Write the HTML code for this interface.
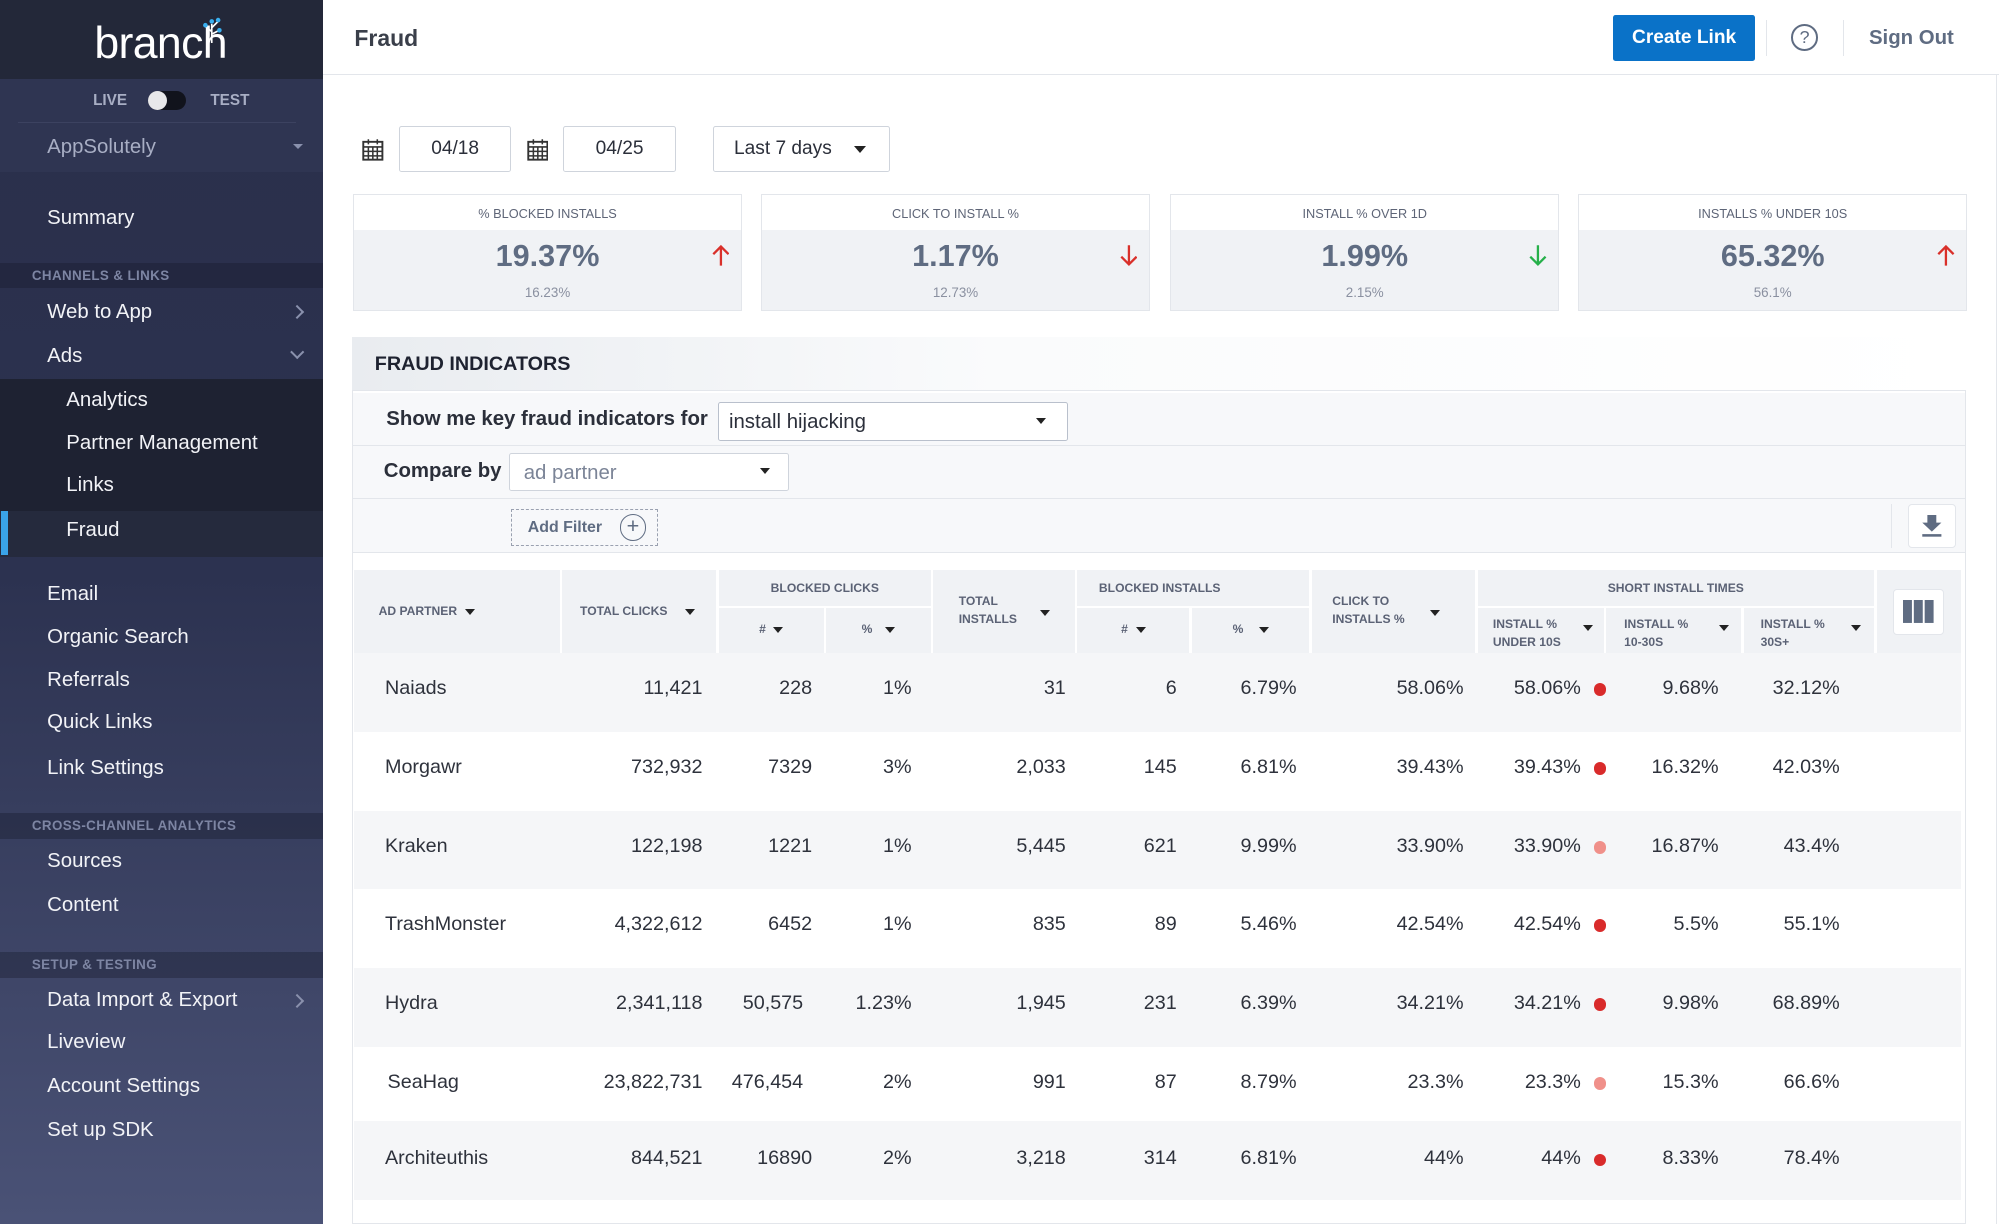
<!DOCTYPE html>
<html><head><meta charset="utf-8"><style>
*{box-sizing:border-box;margin:0;padding:0}
html,body{width:1999px;height:1224px;overflow:hidden;background:#fff}
#w{zoom:1.27487;width:1568px;height:960px;position:relative;font-family:"Liberation Sans",sans-serif;color:#2b2f3a}
.a{position:absolute}
#sb{left:0;top:0;width:253px;height:960px;background:linear-gradient(#2a2f4a 0,#2c3250 450px,#4a5276 960px);color:#fff}
.si{position:absolute;left:37px;font-size:16px;color:#f2f3f7}
.sub{position:absolute;left:52px;font-size:16px;color:#f2f3f7}
.sh{position:absolute;left:0;width:253px;height:20px;background:rgba(20,24,40,.35);font-size:10.5px;font-weight:bold;color:#7d85a3;padding:4px 0 0 25px;letter-spacing:.3px}
.chev{position:absolute;right:16px;width:8px;height:8px;border-right:1.6px solid #8a91ad;border-top:1.6px solid #8a91ad}
.card{position:absolute;top:152px;width:305px;height:92px;border:1.5px solid #e3e6eb;background:#f0f2f5}
.card .t{height:28px;background:#fff;text-align:center;font-size:10px;color:#5e6577;padding-top:9px}
.card .v{text-align:center;font-size:24px;font-weight:bold;color:#5f6c82;margin-top:7px}
.card .p{text-align:center;font-size:10.5px;color:#8a90a0;margin-top:8px}
.card svg{position:absolute;right:9px;top:39px}
.box{position:absolute;border:1px solid #cfd4dc;border-radius:2px;background:#fff;font-size:15px;color:#2b2f3a}
.th{position:absolute;background:#f0f2f5;font-size:9.5px;font-weight:bold;color:#5b6275}
.row{position:absolute;left:278px;width:1260px;height:62px;font-size:15.5px;color:#2e323c}
.row span{position:absolute;top:19px}
.r{text-align:right}
.dot{position:absolute;width:10px;height:10px;border-radius:50%;top:24px}
.tri{display:inline-block;width:0;height:0;border-left:4px solid transparent;border-right:4px solid transparent;border-top:5px solid #222;margin-left:6px;vertical-align:middle}
</style></head><body><div id="w">
<div id="sb" class="a">
 <div class="a" style="left:0;top:0;width:253px;height:62px;background:#232839"></div>
 <div class="a" style="left:74px;top:15px;font-size:35px;color:#fff;letter-spacing:-.5px">branch</div>
 <svg class="a" style="left:156px;top:12px" width="24" height="22"><g stroke="#fff" stroke-width="1.3" fill="none"><path d="M10 22V7M10 13l-5-4M10 10l5-5M10 15l6-3"/></g><g fill="#3ab0f0"><circle cx="10" cy="5" r="1.8"/><circle cx="5" cy="8" r="1.8"/><circle cx="15" cy="4" r="1.8"/><circle cx="16" cy="12" r="1.8"/></g></svg>
 <div class="a" style="left:0;top:62px;width:253px;height:73px;background:#2f3552"></div>
 <div class="a" style="left:73px;top:72px;font-size:12px;font-weight:bold;color:#a8aec4">LIVE</div>
 <div class="a" style="left:116px;top:71px;width:30px;height:15px;border-radius:8px;background:#11131c"></div>
 <div class="a" style="left:116px;top:71px;width:15px;height:15px;border-radius:50%;background:#e8e8ea"></div>
 <div class="a" style="left:165px;top:72px;font-size:12px;font-weight:bold;color:#a8aec4">TEST</div>
 <div class="a" style="left:14px;top:96px;width:218px;border-top:1px solid #3c4260"></div>
 <div class="a" style="left:37px;top:107px;font-size:16px;color:#a8aec4">AppSolutely</div>
 <div class="a" style="left:230px;top:113px;border-left:4px solid transparent;border-right:4px solid transparent;border-top:4px solid #8a91ad"></div>
 <div class="si" style="top:162px">Summary</div>
 <div class="sh" style="top:206px">CHANNELS &amp; LINKS</div>
 <div class="si" style="top:236px">Web to App</div><div class="chev" style="top:241px;transform:rotate(45deg)"></div>
 <div class="si" style="top:271px">Ads</div><div class="chev" style="top:272px;transform:rotate(135deg)"></div>
 <div class="a" style="left:0;top:297px;width:253px;height:140px;background:#1e2232"></div>
 <div class="a" style="left:0;top:401px;width:253px;height:36px;background:#252a3d"></div>
 <div class="a" style="left:1px;top:401px;width:5px;height:34px;background:#3aa3e8"></div>
 <div class="sub" style="top:305px">Analytics</div>
 <div class="sub" style="top:339px">Partner Management</div>
 <div class="sub" style="top:372px">Links</div>
 <div class="sub" style="top:407px">Fraud</div>
 <div class="si" style="top:457px">Email</div>
 <div class="si" style="top:491px">Organic Search</div>
 <div class="si" style="top:525px">Referrals</div>
 <div class="si" style="top:558px">Quick Links</div>
 <div class="si" style="top:594px">Link Settings</div>
 <div class="sh" style="top:638px">CROSS-CHANNEL ANALYTICS</div>
 <div class="si" style="top:667px">Sources</div>
 <div class="si" style="top:701px">Content</div>
 <div class="sh" style="top:747px">SETUP &amp; TESTING</div>
 <div class="si" style="top:776px">Data Import &amp; Export</div><div class="chev" style="top:781px;transform:rotate(45deg)"></div>
 <div class="si" style="top:809px">Liveview</div>
 <div class="si" style="top:843px">Account Settings</div>
 <div class="si" style="top:878px">Set up SDK</div>
</div>
<!-- header -->
<div class="a" style="left:253px;top:58px;width:1315px;border-top:1px solid #e3e6eb"></div>
<div class="a" style="left:1566px;top:58px;height:902px;border-left:1px solid #e3e6eb"></div>
<div class="a" style="left:278px;top:20px;font-size:18px;font-weight:bold;color:#3a3f4a">Fraud</div>
<div class="a" style="left:1265px;top:12px;width:112px;height:36px;background:#0a72c8;border-radius:2px;color:#fff;font-weight:bold;font-size:15px;text-align:center;line-height:36px">Create Link</div>
<div class="a" style="left:1385px;top:16px;height:28px;border-left:1px solid #e3e6eb"></div>
<div class="a" style="left:1405px;top:19px;width:21px;height:21px;border:1.6px solid #5f6c82;border-radius:50%;color:#5f6c82;font-size:14px;text-align:center;line-height:18px">?</div>
<div class="a" style="left:1446px;top:16px;height:28px;border-left:1px solid #e3e6eb"></div>
<div class="a" style="left:1466px;top:21px;font-size:16px;font-weight:bold;color:#5f6c82">Sign Out</div>
<!-- date row -->
<svg class="a" style="left:284px;top:108px" width="17" height="18"><rect x="1" y="3" width="15" height="14" fill="none" stroke="#333" stroke-width="1.5"/><path d="M1 7h15M5 1v4M12 1v4M1 10.5h15M1 14h15M5 7v10M8.5 7v10M12 7v10" stroke="#333" stroke-width="1.2"/></svg>
<div class="box" style="left:313px;top:99px;width:88px;height:36px;text-align:center;line-height:34px">04/18</div>
<svg class="a" style="left:413px;top:108px" width="17" height="18"><rect x="1" y="3" width="15" height="14" fill="none" stroke="#333" stroke-width="1.5"/><path d="M1 7h15M5 1v4M12 1v4M1 10.5h15M1 14h15M5 7v10M8.5 7v10M12 7v10" stroke="#333" stroke-width="1.2"/></svg>
<div class="box" style="left:442px;top:99px;width:88px;height:36px;text-align:center;line-height:34px">04/25</div>
<div class="box" style="left:559px;top:99px;width:139px;height:36px;line-height:34px;padding-left:16px">Last 7 days<span class="a" style="left:110px;top:15px;border-left:5px solid transparent;border-right:5px solid transparent;border-top:6px solid #222"></span></div>
<!-- cards -->
<div class="card" style="left:277px"><div class="t">% BLOCKED INSTALLS</div><div class="v">19.37%</div><div class="p">16.23%</div><svg width="14" height="18"><path d="M7 17V2M1 8l6-6 6 6" stroke="#d9302a" stroke-width="1.8" fill="none"/></svg></div>
<div class="card" style="left:597px"><div class="t">CLICK TO INSTALL %</div><div class="v">1.17%</div><div class="p">12.73%</div><svg width="14" height="18"><path d="M7 1v15M1 10l6 6 6-6" stroke="#d9302a" stroke-width="1.8" fill="none"/></svg></div>
<div class="card" style="left:918px"><div class="t">INSTALL % OVER 1D</div><div class="v">1.99%</div><div class="p">2.15%</div><svg width="14" height="18"><path d="M7 1v15M1 10l6 6 6-6" stroke="#26b04a" stroke-width="1.8" fill="none"/></svg></div>
<div class="card" style="left:1238px"><div class="t">INSTALLS % UNDER 10S</div><div class="v">65.32%</div><div class="p">56.1%</div><svg width="14" height="18"><path d="M7 17V2M1 8l6-6 6 6" stroke="#d9302a" stroke-width="1.8" fill="none"/></svg></div>
<!-- panel -->
<div class="a" style="left:276px;top:264px;width:1266px;height:696px;border:1px solid #e3e6eb;background:#fff"></div>
<div class="a" style="left:276px;top:264px;width:1266px;height:43px;background:linear-gradient(90deg,#e9ecf0,#fafbfc 40%,#fff);border-bottom:1px solid #e3e6eb"></div>
<div class="a" style="left:294px;top:277px;font-size:15.5px;font-weight:bold;color:#1e2230">FRAUD INDICATORS</div>
<div class="a" style="left:277px;top:308px;width:1264px;height:125px;background:#f7f8fa"></div>
<div class="a" style="left:277px;top:349px;width:1264px;border-top:1px solid #e3e6eb"></div>
<div class="a" style="left:277px;top:391px;width:1264px;border-top:1px solid #e3e6eb"></div>
<div class="a" style="left:277px;top:433px;width:1264px;border-top:1px solid #e3e6eb"></div>
<div class="a" style="left:303px;top:320px;font-size:16px;font-weight:bold;color:#2b2f3a">Show me key fraud indicators for</div>
<div class="box" style="left:563px;top:315px;width:275px;height:31px;line-height:31px;padding-left:8px;font-size:16px;border-color:#b9c0cc">install hijacking<span class="a" style="left:249px;top:12px;border-left:4px solid transparent;border-right:4px solid transparent;border-top:5px solid #222"></span></div>
<div class="a" style="left:301px;top:361px;font-size:16px;font-weight:bold;color:#2b2f3a">Compare by</div>
<div class="box" style="left:399px;top:355px;width:220px;height:30px;line-height:30px;padding-left:11px;font-size:16px;color:#7b8497">ad partner<span class="a" style="left:196px;top:11px;border-left:4px solid transparent;border-right:4px solid transparent;border-top:5px solid #222"></span></div>
<div class="a" style="left:401px;top:399px;width:115px;height:29px;border:1px dashed #9aa1b0"></div>
<div class="a" style="left:414px;top:407px;font-size:12.5px;font-weight:bold;color:#5f6c82">Add Filter</div>
<div class="a" style="left:486px;top:403px;width:21px;height:21px;border:1px solid #5f6c82;border-radius:50%;color:#5f6c82;text-align:center;line-height:18px;font-size:17px">+</div>
<div class="a" style="left:1483px;top:395px;height:35px;border-left:1px solid #e3e6eb"></div>
<div class="a" style="left:1497px;top:395px;width:37px;height:35px;border:1px solid #e3e6eb;border-radius:3px;background:#fff"></div>
<svg class="a" style="left:1507px;top:404px" width="17" height="17"><path d="M5 0h7v6h4l-7.5 7L1 6h4z" fill="#5f6c82"/><rect x="1" y="15" width="15" height="2" fill="#5f6c82"/></svg>
<!-- table header -->
<div class="th" style="left:278px;top:447px;width:161px;height:65px;padding:27px 0 0 19px">AD PARTNER<span class="tri"></span></div>
<div class="th" style="left:441px;top:447px;width:121px;height:65px;padding:27px 0 0 14px">TOTAL CLICKS<span class="tri" style="margin-left:14px"></span></div>
<div class="th" style="left:564px;top:447px;width:166px;height:28px;text-align:center;padding-top:9px">BLOCKED CLICKS</div>
<div class="th" style="left:564px;top:477px;width:82px;height:35px;text-align:center;padding-top:11px">#<span class="tri"></span></div>
<div class="th" style="left:648px;top:477px;width:82px;height:35px;text-align:center;padding-top:11px">%<span class="tri" style="margin-left:10px"></span></div>
<div class="th" style="left:732px;top:447px;width:111px;height:65px;padding:18px 0 0 20px;line-height:14px">TOTAL<br>INSTALLS<span class="tri" style="margin-left:18px;margin-top:-10px"></span></div>
<div class="th" style="left:845px;top:447px;width:182px;height:28px;padding:9px 0 0 17px">BLOCKED INSTALLS</div>
<div class="th" style="left:845px;top:477px;width:88px;height:35px;text-align:center;padding-top:11px">#<span class="tri"></span></div>
<div class="th" style="left:935px;top:477px;width:92px;height:35px;text-align:center;padding-top:11px">%<span class="tri" style="margin-left:12px"></span></div>
<div class="th" style="left:1029px;top:447px;width:128px;height:65px;padding:18px 0 0 16px;line-height:14px">CLICK TO<br>INSTALLS %<span class="tri" style="margin-left:20px;margin-top:-10px"></span></div>
<div class="th" style="left:1159px;top:447px;width:311px;height:28px;text-align:center;padding-top:9px">SHORT INSTALL TIMES</div>
<div class="th" style="left:1159px;top:477px;width:99px;height:35px;padding:6px 0 0 12px;line-height:14px">INSTALL %<br>UNDER 10S</div><span class="tri a" style="left:1236px;top:490px"></span>
<div class="th" style="left:1260px;top:477px;width:106px;height:35px;padding:6px 0 0 14px;line-height:14px">INSTALL %<br>10-30S</div><span class="tri a" style="left:1342px;top:490px"></span>
<div class="th" style="left:1368px;top:477px;width:102px;height:35px;padding:6px 0 0 13px;line-height:14px">INSTALL %<br>30S+</div><span class="tri a" style="left:1446px;top:490px"></span>
<div class="th" style="left:1472px;top:447px;width:66px;height:65px"></div>
<div class="a" style="left:1485px;top:462px;width:40px;height:36px;background:#fff;border:1px solid #e3e6eb;border-radius:3px"></div>
<svg class="a" style="left:1493px;top:471px" width="24" height="18"><rect x="0" y="0" width="7" height="18" fill="#5f6c82"/><rect x="8.5" y="0" width="7" height="18" fill="#5f6c82"/><rect x="17" y="0" width="7" height="18" fill="#5f6c82"/></svg>
<!-- rows -->
<div class="row" style="top:512px;background:#f5f6f8"><span style="left:24px">Naiads</span><span class="r" style="right:987px">11,421</span><span class="r" style="right:901px">228</span><span class="r" style="right:823px">1%</span><span class="r" style="right:702px">31</span><span class="r" style="right:615px">6</span><span class="r" style="right:521px">6.79%</span><span class="r" style="right:390px">58.06%</span><span class="r" style="right:298px">58.06%</span><div class="dot" style="left:972px;background:#d92b2b"></div><span class="r" style="right:190px">9.68%</span><span class="r" style="right:95px">32.12%</span></div>
<div class="row" style="top:574px;background:#fff"><span style="left:24px">Morgawr</span><span class="r" style="right:987px">732,932</span><span class="r" style="right:901px">7329</span><span class="r" style="right:823px">3%</span><span class="r" style="right:702px">2,033</span><span class="r" style="right:615px">145</span><span class="r" style="right:521px">6.81%</span><span class="r" style="right:390px">39.43%</span><span class="r" style="right:298px">39.43%</span><div class="dot" style="left:972px;background:#d92b2b"></div><span class="r" style="right:190px">16.32%</span><span class="r" style="right:95px">42.03%</span></div>
<div class="row" style="top:636px;background:#f5f6f8"><span style="left:24px">Kraken</span><span class="r" style="right:987px">122,198</span><span class="r" style="right:901px">1221</span><span class="r" style="right:823px">1%</span><span class="r" style="right:702px">5,445</span><span class="r" style="right:615px">621</span><span class="r" style="right:521px">9.99%</span><span class="r" style="right:390px">33.90%</span><span class="r" style="right:298px">33.90%</span><div class="dot" style="left:972px;background:#f0908a"></div><span class="r" style="right:190px">16.87%</span><span class="r" style="right:95px">43.4%</span></div>
<div class="row" style="top:697px;background:#fff"><span style="left:24px">TrashMonster</span><span class="r" style="right:987px">4,322,612</span><span class="r" style="right:901px">6452</span><span class="r" style="right:823px">1%</span><span class="r" style="right:702px">835</span><span class="r" style="right:615px">89</span><span class="r" style="right:521px">5.46%</span><span class="r" style="right:390px">42.54%</span><span class="r" style="right:298px">42.54%</span><div class="dot" style="left:972px;background:#d92b2b"></div><span class="r" style="right:190px">5.5%</span><span class="r" style="right:95px">55.1%</span></div>
<div class="row" style="top:759px;background:#f5f6f8"><span style="left:24px">Hydra</span><span class="r" style="right:987px">2,341,118</span><span class="r" style="right:908px">50,575</span><span class="r" style="right:823px">1.23%</span><span class="r" style="right:702px">1,945</span><span class="r" style="right:615px">231</span><span class="r" style="right:521px">6.39%</span><span class="r" style="right:390px">34.21%</span><span class="r" style="right:298px">34.21%</span><div class="dot" style="left:972px;background:#d92b2b"></div><span class="r" style="right:190px">9.98%</span><span class="r" style="right:95px">68.89%</span></div>
<div class="row" style="top:821px;background:#fff"><span style="left:26px">SeaHag</span><span class="r" style="right:987px">23,822,731</span><span class="r" style="right:908px">476,454</span><span class="r" style="right:823px">2%</span><span class="r" style="right:702px">991</span><span class="r" style="right:615px">87</span><span class="r" style="right:521px">8.79%</span><span class="r" style="right:390px">23.3%</span><span class="r" style="right:298px">23.3%</span><div class="dot" style="left:972px;background:#f0908a"></div><span class="r" style="right:190px">15.3%</span><span class="r" style="right:95px">66.6%</span></div>
<div class="row" style="top:879px;background:#f5f6f8"><span style="left:24px;top:21px">Architeuthis</span><span class="r" style="right:987px;top:21px">844,521</span><span class="r" style="right:901px;top:21px">16890</span><span class="r" style="right:823px;top:21px">2%</span><span class="r" style="right:702px;top:21px">3,218</span><span class="r" style="right:615px;top:21px">314</span><span class="r" style="right:521px;top:21px">6.81%</span><span class="r" style="right:390px;top:21px">44%</span><span class="r" style="right:298px;top:21px">44%</span><div class="dot" style="left:972px;top:26px;background:#d92b2b"></div><span class="r" style="right:190px;top:21px">8.33%</span><span class="r" style="right:95px;top:21px">78.4%</span></div>
</div></body></html>
